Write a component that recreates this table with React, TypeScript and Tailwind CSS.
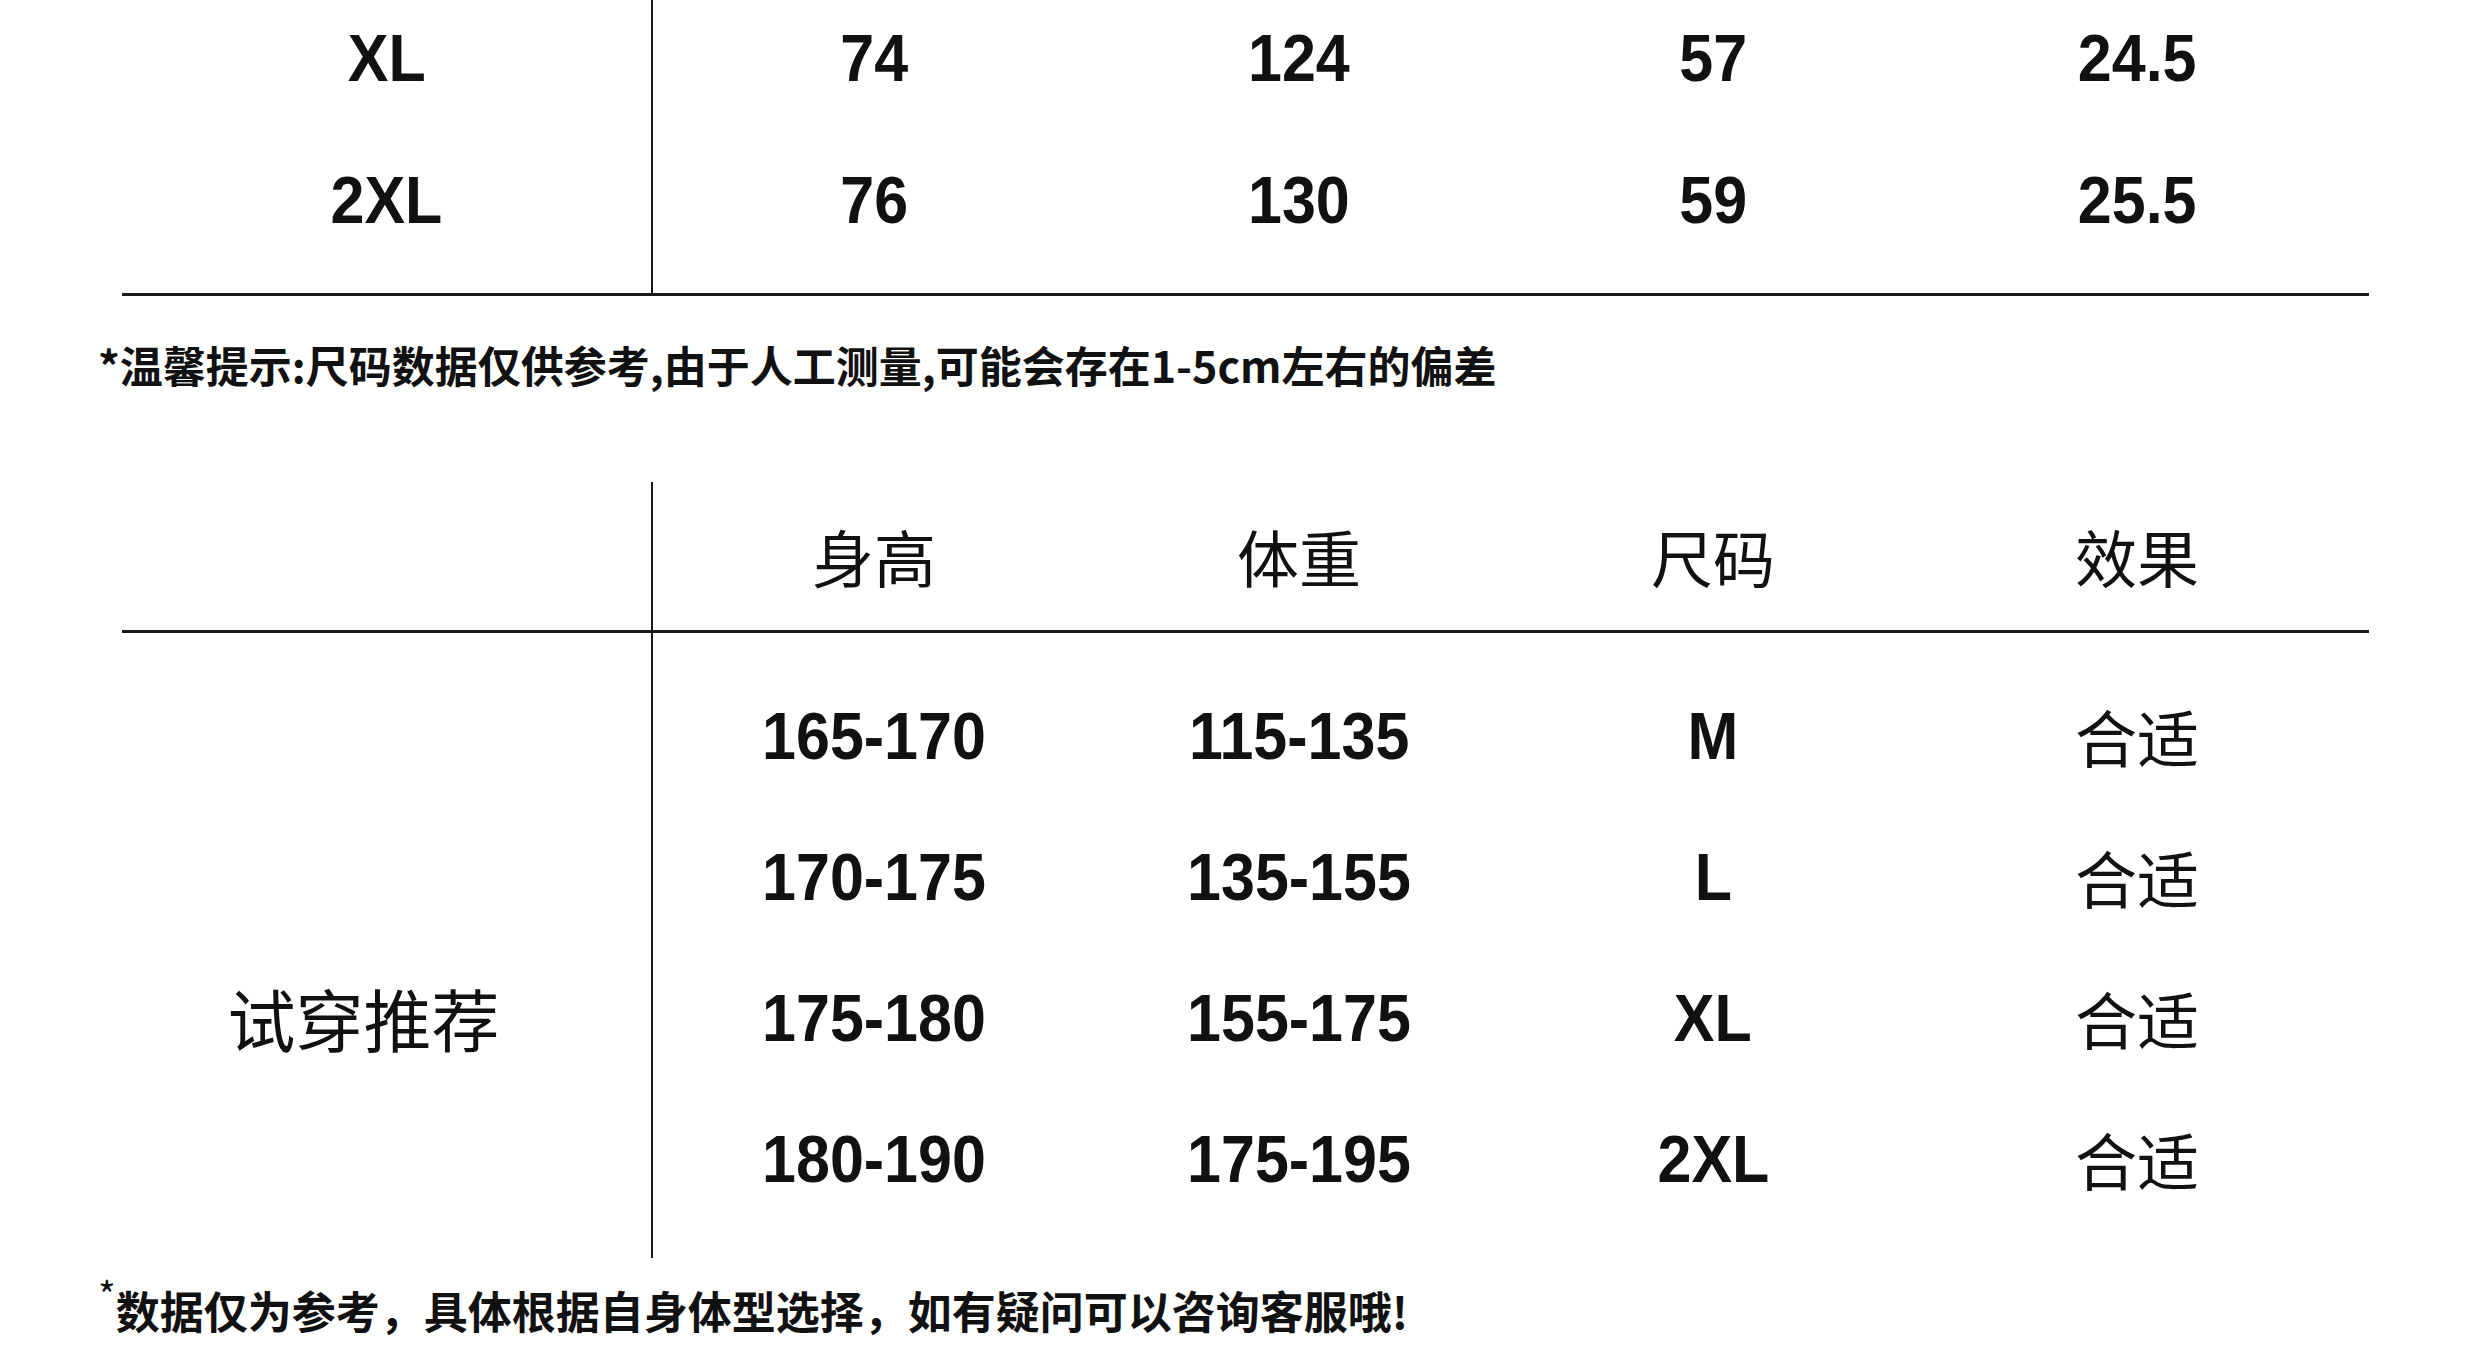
const sizeRows = [
  { size: "XL", values: ["74", "124", "57", "24.5"] },
  { size: "2XL", values: ["76", "130", "59", "25.5"] },
];

const fitRows = [
  { height: "165-170", weight: "115-135", size: "M", effect: "合适" },
  { height: "170-175", weight: "135-155", size: "L", effect: "合适" },
  { height: "175-180", weight: "155-175", size: "XL", effect: "合适" },
  { height: "180-190", weight: "175-195", size: "2XL", effect: "合适" },
];

const numFont = "font-['Liberation_Sans',Arial,sans-serif] font-bold text-[67px] leading-none";
const cjkFont = "font-['Noto_Sans_CJK_SC','Noto_Sans',sans-serif]";
const cols = "grid grid-cols-[420px_430px_398px_450px] items-center";

function Num({ children }: { children: React.ReactNode }) {
  return <span className={`inline-block scale-x-[0.91] ${numFont}`}>{children}</span>;
}

function Cjk({ children, size = "text-[62px]" }: { children: React.ReactNode; size?: string }) {
  return <span className={`${cjkFont} ${size} font-normal leading-none`}>{children}</span>;
}

export default function App() {
  return (
    <div className="w-[2480px] h-[1365px] overflow-hidden bg-white text-[#111]">
      {/* size chart tail */}
      <div className="ml-[122px] w-[2247px] -mt-[14px] flex border-b-[3px] border-[#1a1a1a]">
        <div className="w-[531px] shrink-0 border-r-2 border-[#1a1a1a] pb-[23px]">
          {sizeRows.map((r) => (
            <div key={r.size} className="h-[142px] flex items-center justify-center">
              <Num>{r.size}</Num>
            </div>
          ))}
        </div>
        <div className="flex-1 pl-[11px] pb-[23px]">
          {sizeRows.map((r) => (
            <div key={r.size} className={`h-[142px] ${cols}`}>
              {r.values.map((v, i) => (
                <div key={i} className="flex justify-center">
                  <Num>{v}</Num>
                </div>
              ))}
            </div>
          ))}
        </div>
      </div>

      <div className={`ml-[98px] mt-[38px] h-[60px] leading-[60px] text-[43px] font-bold ${cjkFont}`}>
        *温馨提示:尺码数据仅供参考,由于人工测量,可能会存在1-5cm左右的偏差
      </div>

      {/* fit recommendation */}
      <div className="ml-[122px] w-[2247px] mt-[88px]">
        <div className="flex h-[151px] border-b-[3px] border-[#1a1a1a]">
          <div className="w-[531px] shrink-0 border-r-2 border-[#1a1a1a]" />
          <div className={`flex-1 pl-[11px] ${cols}`}>
            {["身高", "体重", "尺码", "效果"].map((h) => (
              <div key={h} className="flex justify-center">
                <Cjk>{h}</Cjk>
              </div>
            ))}
          </div>
        </div>
        <div className="flex">
          <div className="w-[531px] shrink-0 border-r-2 border-[#1a1a1a] pt-[32px] pb-[29px]">
            {fitRows.map((r, i) => (
              <div key={i} className="h-[141px] flex items-center justify-center pr-[46px]">
                {i === 2 && <Cjk size="text-[68px]">试穿推荐</Cjk>}
              </div>
            ))}
          </div>
          <div className="flex-1 pl-[11px] pt-[32px] pb-[29px]">
            {fitRows.map((r, i) => (
              <div key={i} className={`h-[141px] ${cols}`}>
                <div className="flex justify-center"><Num>{r.height}</Num></div>
                <div className="flex justify-center"><Num>{r.weight}</Num></div>
                <div className="flex justify-center"><Num>{r.size}</Num></div>
                <div className="flex justify-center"><Cjk>{r.effect}</Cjk></div>
              </div>
            ))}
          </div>
        </div>
      </div>

      <div className={`ml-[98px] mt-[22px] h-[60px] leading-[60px] text-[44px] font-bold ${cjkFont} flex`}>
        <span className="relative -top-[16px] text-[38px] font-normal">*</span>
        <span>数据仅为参考，具体根据自身体型选择，如有疑问可以咨询客服哦!</span>
      </div>
    </div>
  );
}
